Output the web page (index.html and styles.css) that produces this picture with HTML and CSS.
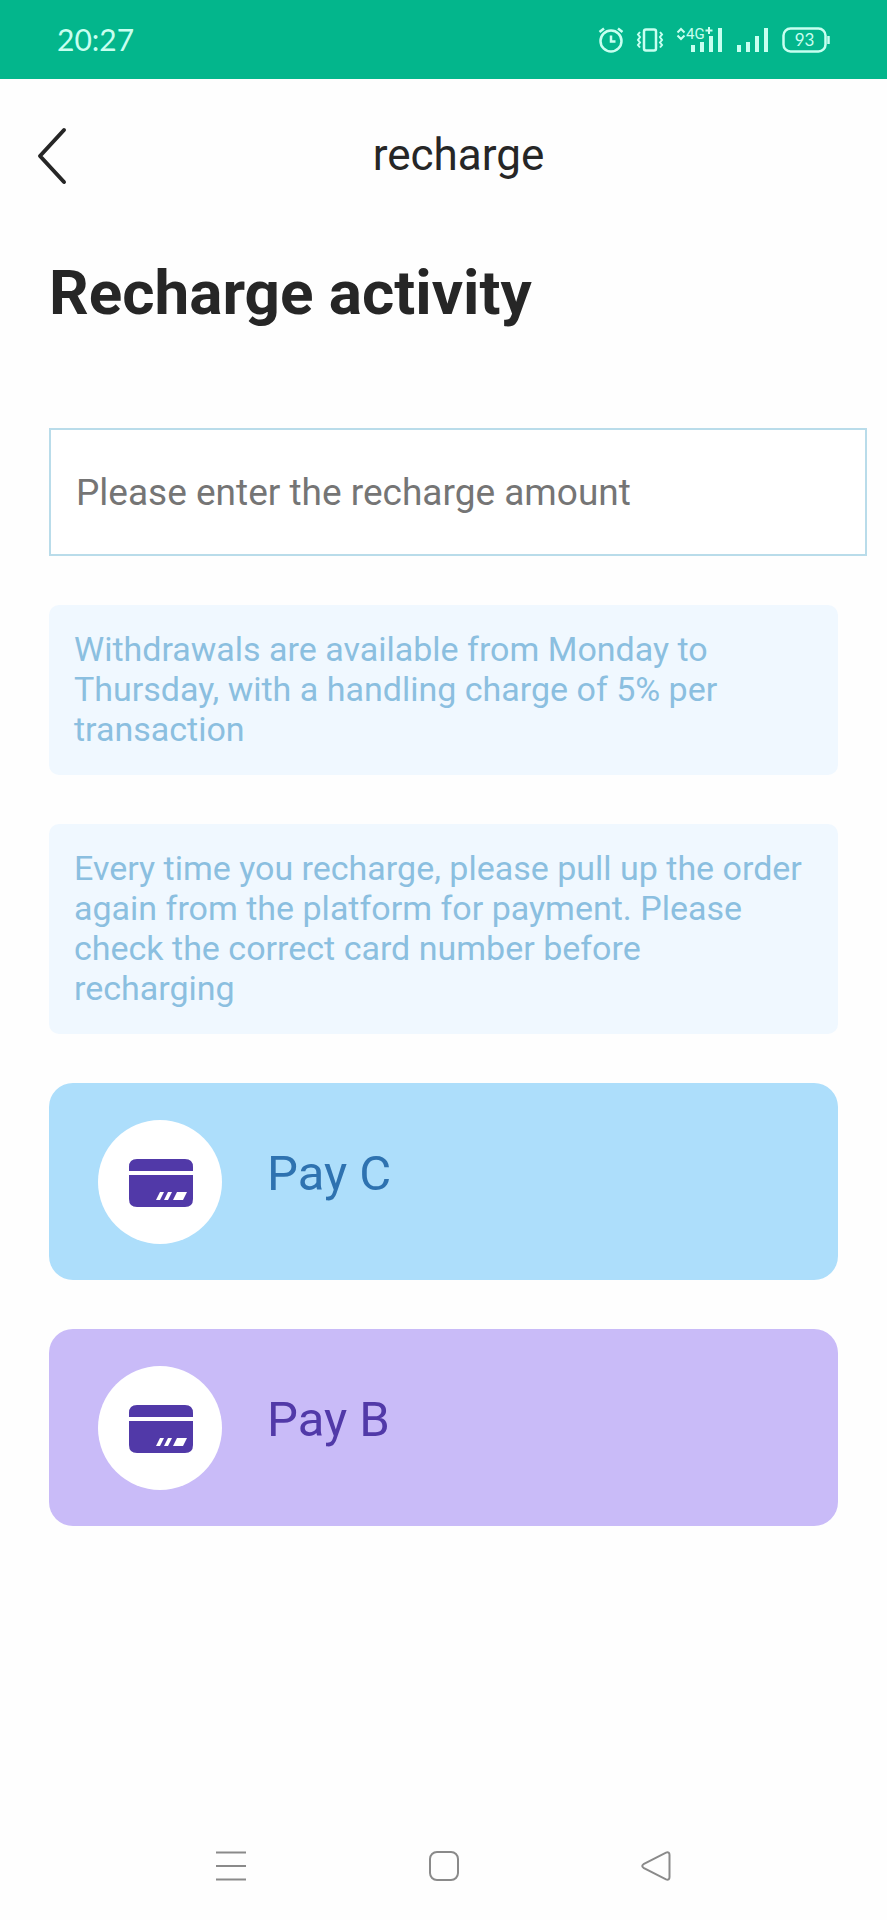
FILE: index.html
```
<!DOCTYPE html>
<html lang="en">
<head>
    <meta charset="UTF-8">
    <meta name="viewport" content="width=device-width, initial-scale=1.0">
    <title>recharge</title>
    <link rel="stylesheet" href="styles.css">
</head>
<body>
    <div class="status-bar">
        <span class="time">20:27</span>
        <div class="status-icons">
            <svg class="alarm" width="26" height="26" viewBox="0 0 26 26">
                <circle cx="13" cy="14" r="10.5"/>
                <path d="M13 8.500v6h4.500M1.500 5L6 1.500M24.500 5L20 1.500"/>
            </svg>
            <svg class="vibrate" width="28" height="26" viewBox="0 0 28 26">
                <rect x="8" y="2.500" width="12" height="21" rx="2"/>
                <path class="line" d="M4 5l-2 2.500 2 2.500-2 3 2 2.500-2 2.500 2 2.500M24 5l2 2.500-2 2.500 2 3-2 2.500 2 2.500-2 2.500"/>
            </svg>
            <svg class="mobile" width="48" height="36" viewBox="0 -5 48 36">
                <path class="line" d="M1.500 5.500l3.500-3.500 3.500 3.500M1.500 8.500l3.500 3.500 3.500-3.500"/>
                <text class="network" x="10" y="12">4G</text>
                <path class="line" d="M33 0v7M29.500 3.500h7"/>
                <path class="bars" d="M17 18v7M26 15v10M35 9v16M44 1v24"/>
            </svg>
            <svg class="signal" width="34" height="26" viewBox="0 0 34 26">
                <path class="bars" d="M3 18v7M12 15v10M21 9v16M30 1v24"/>
            </svg>
            <svg class="battery" width="48" height="26" viewBox="0 0 48 26">
                <rect x="1.500" y="1.500" width="42" height="23" rx="7"/>
                <path d="M46.500 9v8"/>
                <text x="22.500" y="19" text-anchor="middle">93</text>
            </svg>
        </div>
    </div>

    <header class="header">
        <button class="back" aria-label="Back">
            <svg width="32" height="60" viewBox="0 0 32 60">
                <path d="M28 5L4 31L28 57"/>
            </svg>
        </button>
        <div class="header-title">recharge</div>
    </header>

    <main class="container">
        <h1>Recharge activity</h1>
        <input class="amount" type="text" aria-label="Recharge amount" placeholder="Please enter the recharge amount">

        <p class="notice">Withdrawals are available from Monday to Thursday, with a handling charge of 5% per transaction</p>
        <p class="notice">Every time you recharge, please pull up the order again from the platform for payment. Please check the correct card number before recharging</p>

        <button class="pay pay-c">
            <span class="pay-icon">
                <svg width="66" height="50" viewBox="-2 -2 66 50">
                    <path d="M0 12V8Q0 0 8 0H56Q64 0 64 8V12ZM0 16H64V40Q64 48 56 48H8Q0 48 0 40Z"/>
                    <path class="mark" d="M31 33h4l-4 8h-4zM39 33h4l-4 8h-4zM48 33h10l-4 8h-10z"/>
                </svg>
            </span>
            <span class="pay-name">Pay C</span>
        </button>
        <button class="pay pay-b">
            <span class="pay-icon">
                <svg width="66" height="50" viewBox="-2 -2 66 50">
                    <path d="M0 12V8Q0 0 8 0H56Q64 0 64 8V12ZM0 16H64V40Q64 48 56 48H8Q0 48 0 40Z"/>
                    <path class="mark" d="M31 33h4l-4 8h-4zM39 33h4l-4 8h-4zM48 33h10l-4 8h-10z"/>
                </svg>
            </span>
            <span class="pay-name">Pay B</span>
        </button>
    </main>

    <nav class="nav-bar">
        <button aria-label="Recent apps">
            <svg width="30" height="30" viewBox="0 0 30 30"><path d="M0 1.500h30M0 15h30M0 28.500h30"/></svg>
        </button>
        <button aria-label="Home">
            <svg width="30" height="30" viewBox="0 0 30 30"><rect x="1" y="1" width="28" height="28" rx="7"/></svg>
        </button>
        <button aria-label="Back">
            <svg width="30" height="30" viewBox="0 0 30 30"><path d="M2.500 13.200L25 1.600Q28.500 0.500 28.500 4V26Q28.500 29.500 25 28.400L2.500 16.800Q0 15 2.500 13.200Z"/></svg>
        </button>
    </nav>
</body>
</html>
```

FILE: styles.css
```
* {
    box-sizing: border-box;
}

body {
    font-family: Roboto, sans-serif;
    margin: 0;
    min-height: 100vh;
    display: flex;
    flex-direction: column;
    background-color: #fefefe;
    color: #262626;
}

button {
    font-family: inherit;
    padding: 0;
    border: none;
    background: none;
    cursor: pointer;
}

svg {
    display: block;
    fill: none;
}

.status-bar {
    display: flex;
    justify-content: space-between;
    align-items: center;
    height: 79px;
    padding: 0 57px;
    background-color: #03b68c;
    color: #c8fff0;
}

.time {
    padding-bottom: 2px;
    font-family: Lato, sans-serif;
    font-size: 30px;
}

.status-icons {
    display: flex;
    align-items: center;
    gap: 12px;
}

.status-icons svg {
    stroke: #c8fff0;
    stroke-width: 2.5;
}

.status-icons text {
    font-family: Lato, sans-serif;
    font-size: 17px;
    fill: #c8fff0;
    stroke: none;
}

.status-icons .network {
    font-family: Roboto, sans-serif;
    font-size: 15px;
}

.status-icons .line {
    stroke-width: 2;
}

.status-icons .bars {
    stroke-width: 4;
}

.header {
    display: flex;
    align-items: center;
    height: 152px;
    padding: 0 42px 0 36px;
}

.back {
    width: 36px;
}

.back path {
    stroke: #262626;
    stroke-width: 4;
    stroke-linecap: round;
    stroke-linejoin: round;
}

.header-title {
    flex: 1;
    text-align: center;
    font-size: 44px;
}

.container {
    flex: 1;
    padding: 26px 49px;
}

h1 {
    margin: 0 0 99px;
    font-size: 62px;
    line-height: 72px;
}

/* the box runs wider than the cards below */
.amount {
    display: block;
    width: calc(100% + 29px);
    height: 128px;
    margin-bottom: 49px;
    padding: 0 25px;
    border: 2px solid #b9dcea;
    background-color: #fff;
    font-family: inherit;
    font-size: 37px;
}

.amount::placeholder {
    color: #757575;
}

.notice {
    margin: 0 0 49px;
    padding: 24px 32px 26px 25px;
    border-radius: 10px;
    background-color: #f0f8ff;
    color: #8bbfe0;
    font-size: 34px;
    line-height: 40px;
}

.pay {
    display: flex;
    align-items: center;
    gap: 45px;
    width: 100%;
    height: 197px;
    margin-bottom: 49px;
    padding: 0 49px;
    border-radius: 24px;
    font-size: 49px;
}

.pay-c {
    background-color: #addefb;
    color: #2e72b0;
}

.pay-b {
    background-color: #c9bbf8;
    color: #5139a8;
}

.pay-icon {
    display: flex;
    align-items: center;
    justify-content: center;
    width: 124px;
    height: 124px;
    border-radius: 50%;
    background-color: #fff;
}

.pay-icon path {
    fill: #5139a8;
}

.pay-icon .mark {
    fill: #fff;
}

.pay-name {
    padding-bottom: 16px;
}

.nav-bar {
    display: flex;
    height: 108px;
    padding: 0 14%;
}

.nav-bar button {
    flex: 1;
    display: flex;
    align-items: center;
    justify-content: center;
}

.nav-bar svg {
    stroke: #8a8a8a;
    stroke-width: 2;
}
```
